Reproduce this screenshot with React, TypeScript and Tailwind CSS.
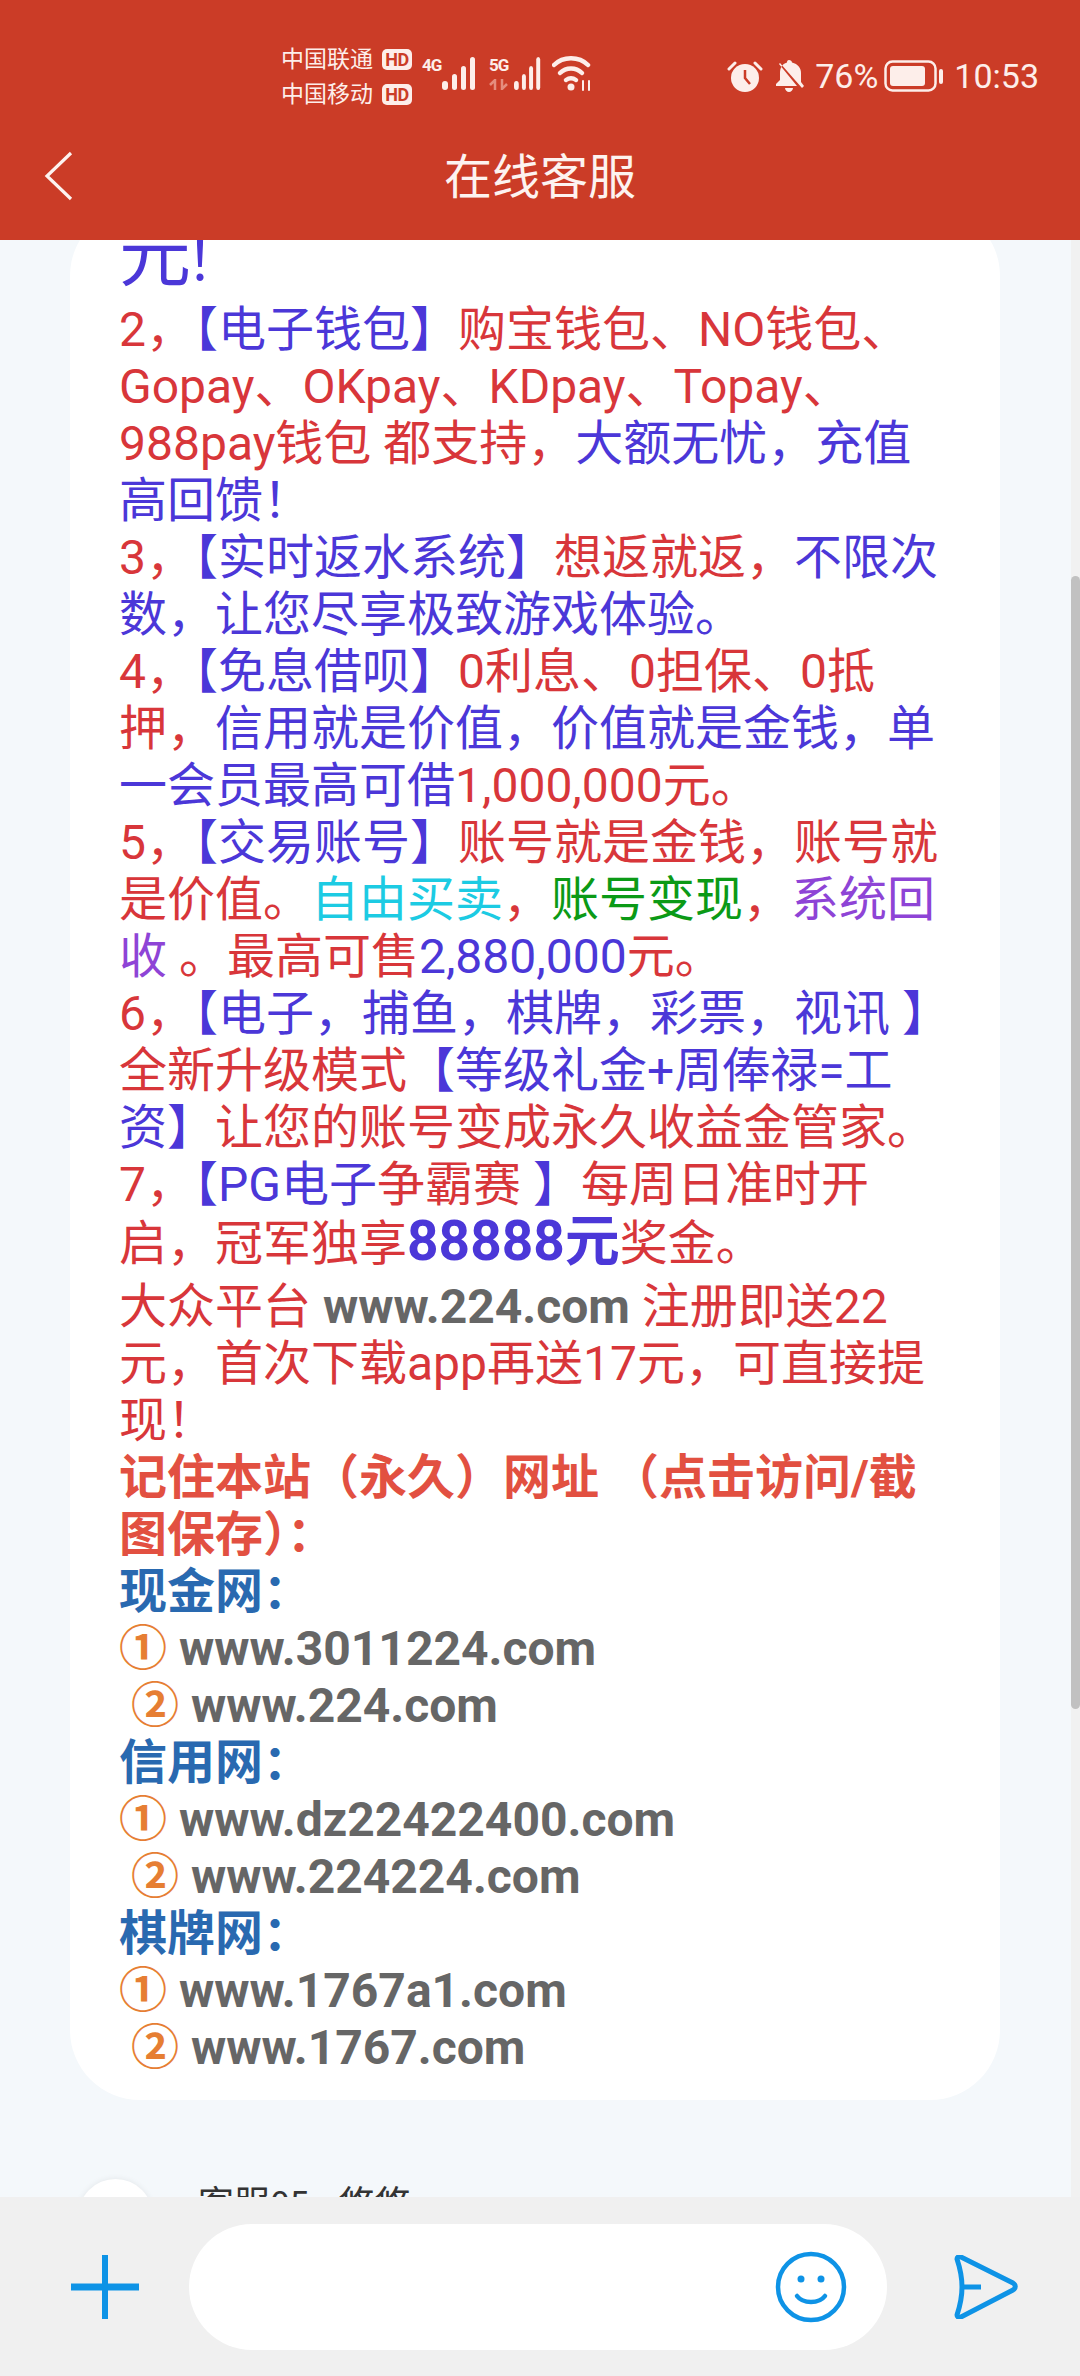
import React from 'react'

const RED = 'text-[#d8363a]'
const BLUE = 'text-[#4b37d8]'

function Signal({ width }: { width: number }) {
  return (
    <svg width={width} height="33" viewBox="0 0 34 33" preserveAspectRatio="none" fill="#fdeeea">
      <rect x="0" y="24" width="6" height="9" rx="3" />
      <rect x="10" y="17" width="5" height="16" rx="2.500" />
      <rect x="19" y="9" width="5" height="24" rx="2.500" />
      <rect x="28" y="0" width="5" height="33" rx="2.500" />
    </svg>
  )
}

function HdBadge() {
  return (
    <span className="h-[21px] w-[30px] rounded-[5px] bg-[#fdeeea] text-center text-[18px] leading-[21px] font-bold tracking-[-0.5px] text-[#cb3c27]">
      HD
    </span>
  )
}

function StatusBar() {
  return (
    <div className="flex h-[105px] items-center pt-[48px] pl-[281px] pr-[41px] text-[#fdeeea]">
      <div className="flex flex-col gap-[12px] text-[23px] leading-[23px]">
        <div className="flex items-center gap-[9px]">
          中国联通
          <HdBadge />
        </div>
        <div className="flex items-center gap-[9px]">
          中国移动
          <HdBadge />
        </div>
      </div>
      <div className="mb-[6px] ml-[10px] flex items-start">
        <span className="w-[20px] text-[17px] leading-[17px] font-bold tracking-[-1px]">4G</span>
        <Signal width={34} />
        <div className="ml-[13px] flex h-[33px] w-[25px] flex-col justify-between">
          <span className="text-[17px] leading-[17px] font-bold tracking-[-1px]">5G</span>
          <svg width="22" height="11" viewBox="0 0 22 11" fill="none" stroke="#e58d7e" strokeWidth="2.500">
            <path d="M6 11V1L1 6M13 0v10l5-5" />
          </svg>
        </div>
        <Signal width={27} />
      </div>
      <svg className="mb-[6px] ml-[11px]" width="40" height="35" viewBox="0 0 40 35" fill="none" stroke="#fdeeea" strokeWidth="4.500" strokeLinecap="round">
        <path d="M2 9c9-9 25-9 34 0" />
        <path d="M8 17c6-6 16-6 22 0" />
        <path d="M14 24c3-2 7-2 10 0" />
        <circle cx="19" cy="31" r="3.500" fill="#fdeeea" stroke="none" />
        <path d="M31 25v9M37 25v9" strokeWidth="2" />
      </svg>
      <div className="mb-[2px] ml-auto flex items-center">
        <svg width="36" height="32" viewBox="0 0 36 32" fill="#fdeeea">
          <circle cx="18" cy="18" r="14" />
          <path d="M18 10v8l5 6" fill="none" stroke="#cb3c27" strokeWidth="2.500" />
          <path d="M2 9l6-6M34 9l-6-6" fill="none" stroke="#fdeeea" strokeWidth="3" strokeLinecap="round" />
        </svg>
        <svg className="ml-[10px]" width="32" height="33" viewBox="0 0 32 33" fill="#fdeeea">
          <path d="M16 1c-1.500 0-2 1-2 2.500C9 5 7 9 7 14v7l-4 4v2h21L6 5 7 4l22 25 2-2-3-4v-9c0-5-3-9-9-10.500C19 2 17.500 1 16 1zM12 29c0 2 2 4 4 4s4-2 4-4z" />
        </svg>
        <span className="ml-[10px] font-['Roboto',sans-serif] text-[34px] leading-[38px]">76%</span>
        <svg className="ml-[6px]" width="60" height="32" viewBox="0 0 60 32" fill="none">
          <rect x="1.500" y="1.500" width="50" height="29" rx="7" stroke="#fdeeea" strokeWidth="2.500" />
          <rect x="6" y="6" width="35" height="20" rx="3" fill="#fdeeea" />
          <rect x="55" y="9" width="4" height="15" rx="2" fill="#fdeeea" />
        </svg>
        <span className="ml-[10px] font-['Roboto',sans-serif] text-[34px] leading-[38px]">10:53</span>
      </div>
    </div>
  )
}

function Header() {
  return (
    <div className="h-[240px] shrink-0 bg-[#cb3c27]">
      <StatusBar />
      <div className="relative mt-[43px] flex h-[60px] items-center justify-center text-[48px] text-[#fdf3f0]">
        <svg className="absolute left-[43px] top-[3px]" width="32" height="50" viewBox="0 0 32 50" fill="none" stroke="#fdf3f0" strokeWidth="3.200">
          <path d="M28 2L4 25l24 23" />
        </svg>
        在线客服
      </div>
    </div>
  )
}

function SiteGroup({ title, first, second }: { title: string; first: string; second: string }) {
  return (
    <>
      <div className="font-bold text-[#2969b0]">{title}</div>
      <div className="font-bold text-[#666666]">
        <span className="text-[#e67e33]">①</span> {first}
      </div>
      <div className="font-bold text-[#666666]">
        <span className="text-[#e67e33]">&nbsp;②</span> {second}
      </div>
    </>
  )
}

function Message() {
  return (
    <div className="-mt-[34px] ml-[70px] w-[930px] rounded-[70px] bg-white pt-[14px] pr-[47px] pb-[24px] pl-[49px] font-['Roboto','Noto_Sans_CJK_SC',sans-serif] text-[48px] leading-[57px]">
      <div className={`text-[72px] leading-[72px] ${BLUE}`}>
        <span className="tracking-[-5px]">元</span>
        <span className="text-[56px]">！</span>
      </div>
      <div className={`mt-[4px] ${RED}`}>
        2，<span className={BLUE}>【电子钱包】</span>购宝钱包、NO钱包、Gopay、OKpay、KDpay、Topay、988pay钱包 都支持，
        <span className={BLUE}>大额无忧，充值高回馈！</span>
      </div>
      <div className={RED}>
        3，<span className={BLUE}>【实时返水系统】</span>想返就返，<span className={BLUE}>不限次数，让您尽享极致游戏体验。</span>
      </div>
      <div className={RED}>
        4，<span className={BLUE}>【免息借呗】</span>0利息、0担保、0抵押，<span className={BLUE}>信用就是价值，价值就是金钱，单一会员最高可借</span>1,000,000元。
      </div>
      <div className={RED}>
        5，<span className={BLUE}>【交易账号】</span>账号就是金钱，账号就是价值。<span className="text-[#1ccbe3]">自由买卖</span>，
        <span className="text-[#0b9a16]">账号变现</span>，<span className="text-[#8e44d6]">系统回收</span> 。最高可售<span className={BLUE}>2,880,000</span>元。
      </div>
      <div className={RED}>
        6，<span className={BLUE}>【电子，捕鱼，棋牌，彩票，视讯 】</span>全新升级模式<span className={BLUE}>【等级礼金+周俸禄=工资】</span>让您的账号变成永久收益金管家。
      </div>
      <div className={`pb-[6px] ${RED}`}>
        7，<span className={BLUE}>【PG电子</span>争霸赛<span className={BLUE}> 】</span>每周日准时开启，冠军独享
        <span className={`text-[55px] font-bold ${BLUE}`}>88888元</span>奖金。
      </div>
      <div className={RED}>
        大众平台 <span className="font-bold text-[#666666]">www.224.com</span> 注册即送22元，首次下载app再送17元，可直接提现！
      </div>
      <div className="font-bold text-[#e25041]">记住本站（永久）网址 （点击访问/截图保存）：</div>
      <SiteGroup title="现金网：" first="www.3011224.com" second="www.224.com" />
      <SiteGroup title="信用网：" first="www.dz22422400.com" second="www.224224.com" />
      <SiteGroup title="棋牌网：" first="www.1767a1.com" second="www.1767.com" />
    </div>
  )
}

function AgentRow() {
  return (
    <div className="mt-[79px] ml-[78px] flex items-start gap-[45px]">
      <div className="h-[75px] w-[75px] rounded-full bg-white shadow-[0_0_6px_rgba(0,0,0,0.08)]" />
      <div className="font-['Noto_Sans_CJK_SC',sans-serif] text-[36px] leading-[44px] text-[#333333]">客服05 - 悠悠</div>
    </div>
  )
}

function Composer() {
  return (
    <div className="flex h-[179px] shrink-0 items-center bg-[#f0f0f0] pl-[71px]">
      <svg width="68" height="64" viewBox="0 0 68 64" fill="#0e93e6">
        <rect x="31" y="0" width="6" height="64" />
        <rect x="0" y="28.500" width="68" height="7" />
      </svg>
      <div className="ml-[50px] flex h-[126px] w-[698px] items-center justify-end rounded-full bg-white pr-[40px]">
        <svg width="72" height="72" viewBox="0 0 72 72" fill="none" stroke="#0e93e6" strokeWidth="4.500">
          <circle cx="36" cy="36" r="33" />
          <circle cx="26" cy="28" r="3.500" fill="#0e93e6" stroke="none" />
          <circle cx="46" cy="28" r="3.500" fill="#0e93e6" stroke="none" />
          <path d="M22 45c6 8 22 8 28 0" strokeLinecap="round" />
        </svg>
      </div>
      <svg className="ml-[67px]" width="64" height="64" viewBox="0 0 64 64" fill="none" stroke="#0e93e6" strokeWidth="5" strokeLinejoin="round">
        <path d="M3 4c0-2 2-3 4-2l52 26c3 2 3 5 0 7L7 62c-2 1-4 0-4-2 3-9 5-18 5-28S6 13 3 4z" />
        <path d="M8 32h19" />
      </svg>
    </div>
  )
}

export default function App() {
  return (
    <div className="flex h-[2376px] w-[1080px] flex-col overflow-hidden font-['Roboto','Noto_Sans_CJK_SC',sans-serif]">
      <Header />
      <div className="flex min-h-0 flex-1">
        <div className="min-w-0 flex-1 overflow-hidden bg-[#f4f8fb]">
          <Message />
          <AgentRow />
        </div>
        <div className="w-[9px] shrink-0 bg-[#f1f1f1] pt-[336px]">
          <div className="h-[1133px] rounded-t-[5px] rounded-b-[5px] bg-[#c1c1c1]" />
        </div>
      </div>
      <Composer />
    </div>
  )
}
